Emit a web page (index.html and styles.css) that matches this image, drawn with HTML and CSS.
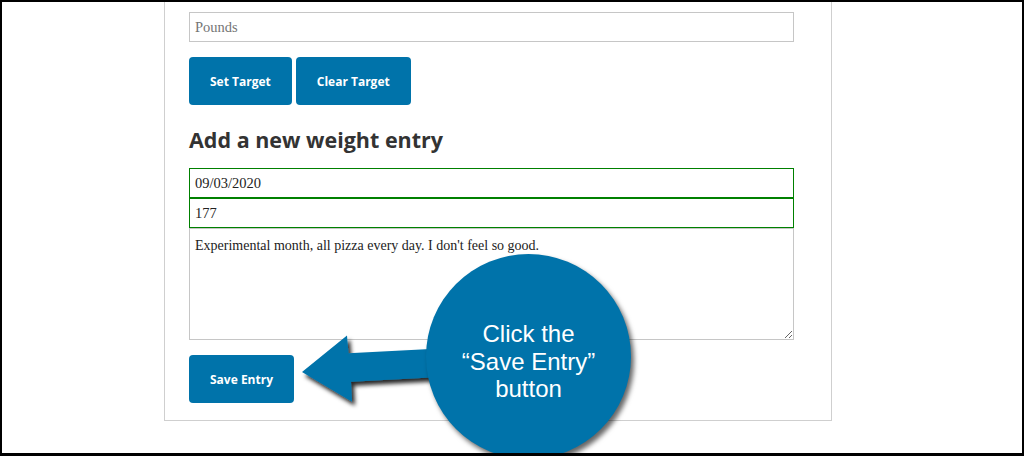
FILE: index.html
```html
<!DOCTYPE html>
<html>
	<head>
		<meta charset="utf-8">
		<title>Weight Tracker</title>
		<link rel="stylesheet" href="styles.css">
	</head>
	<body>
		<div class="screen">
			<div class="panel">
				<label class="field-label">Your target weight</label>
				<input type="text" class="field" placeholder="Pounds">
				<div class="actions">
					<button type="button" class="btn">Set Target</button>
					<button type="button" class="btn">Clear Target</button>
				</div>
				<h2 class="title">Add a new weight entry</h2>
				<input type="text" class="field ok" value="09/03/2020">
				<input type="text" class="field ok" value="177">
				<textarea class="field notes">Experimental month, all pizza every day. I don't feel so good.</textarea>
				<div class="actions save">
					<button type="button" class="btn">Save Entry</button>
				</div>
			</div>
			<!-- callout drawn over the form -->
			<svg class="arrow" width="150" height="90" viewBox="0 0 150 90">
				<defs>
					<filter id="shade" x="-20%" y="-20%" width="150%" height="150%">
						<feDropShadow dx="3" dy="4" stdDeviation="2" flood-color="#000" flood-opacity="0.85"/>
					</filter>
				</defs>
				<polygon points="10,45 55,8.5 56.5,26.3 148,21.5 148,50 59,54.7 60,74.7" fill="#0073aa" filter="url(#shade)"/>
			</svg>
			<div class="callout">Click the<br>“Save Entry”<br>button</div>
		</div>
	</body>
</html>
```

FILE: styles.css
```css
body {
	margin: 0;
	background-color: #fff;
}

.screen {
	position: relative;
	width: 1024px;
	height: 456px;
	box-sizing: border-box;
	border: solid #000;
	border-width: 2px 2px 3px 2px;
	overflow: hidden;
}

.panel {
	width: 668px;
	box-sizing: border-box;
	margin: -19px 0 0 162px;
	padding: 0 37px 17px 24px;
	border: 1px solid #cfcfcf;
}

.field-label {
	display: block;
	font-family: "Open Sans", sans-serif;
	font-size: 13px;
	line-height: 20px;
	color: #333;
	margin-bottom: 8px;
}

.field {
	display: block;
	width: 100%;
	height: 30px;
	box-sizing: border-box;
	margin: 0;
	padding: 0 5px;
	border: 1px solid #c6c6c6;
	border-radius: 0;
	outline: none;
	font-family: "Liberation Serif", serif;
	font-size: 14.5px;
	color: #222;
	background-color: #fff;
}

.field::placeholder {
	color: #757575;
}

.field.ok {
	border-color: #008000;
}

.notes {
	height: 112px;
	padding: 9px 5px;
	font-size: 14px;
	resize: vertical;
}

.actions {
	display: flex;
	gap: 4px;
	margin-top: 15px;
}

.btn {
	height: 48px;
	padding: 0 21px;
	border: none;
	border-radius: 4px;
	background-color: #0073aa;
	color: #fff;
	font-family: "Open Sans", sans-serif;
	font-size: 12px;
	font-weight: 700;
	outline: none;
}

.title {
	margin: 20px 0 13px 0;
	font-family: "Open Sans", sans-serif;
	font-size: 21.5px;
	line-height: 30px;
	font-weight: 700;
	color: #333;
}

.arrow {
	position: absolute;
	left: 290px;
	top: 325px;
	overflow: visible;
}

.callout {
	position: absolute;
	left: 424px;
	top: 252px;
	width: 205px;
	height: 205px;
	box-sizing: border-box;
	padding-top: 10px;
	border-radius: 50%;
	background-color: #0073aa;
	box-shadow: 3px 4px 5px rgba(0, 0, 0, 0.6);
	display: flex;
	align-items: center;
	justify-content: center;
	text-align: center;
	color: #fff;
	font-family: "Liberation Sans", Arial, sans-serif;
	font-size: 24px;
	line-height: 27.5px;
}
```
